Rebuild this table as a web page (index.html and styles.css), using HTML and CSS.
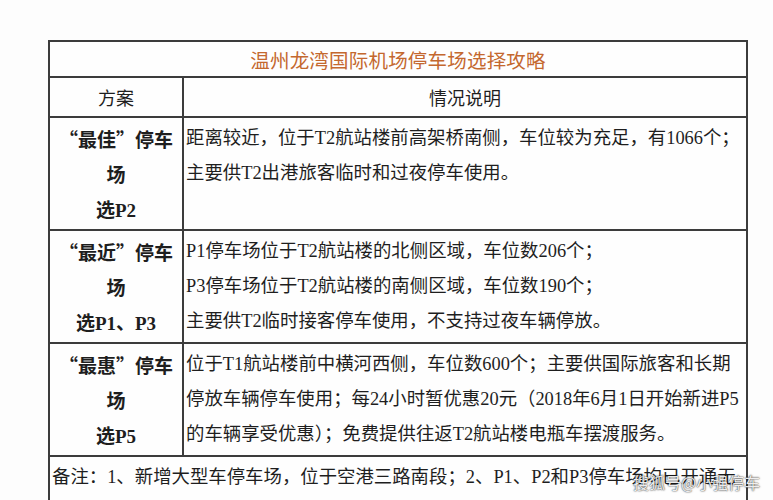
FILE: index.html
```html
<!DOCTYPE html>
<html lang="zh">
<head>
<meta charset="utf-8">
<title>温州龙湾国际机场停车场选择攻略</title>
<link rel="stylesheet" href="styles.css">
</head>
<body>
<div class="page">
  <table class="guide">
    <colgroup><col class="c1"><col class="c2"></colgroup>
    <tr class="r-title"><td colspan="2" class="title">温州龙湾国际机场停车场选择攻略</td></tr>
    <tr class="r-head"><td class="head">方案</td><td class="head">情况说明</td></tr>
    <tr class="r-body">
      <td class="plan"><div><span class="q">“</span>最佳<span class="q">”</span>停车</div><div>场</div><div>选P2</div></td>
      <td class="desc"><div>距离较近，位于T2航站楼前高架桥南侧，车位较为充足，有1066个；</div><div>主要供T2出港旅客临时和过夜停车使用。</div></td>
    </tr>
    <tr class="r-body">
      <td class="plan"><div><span class="q">“</span>最近<span class="q">”</span>停车</div><div>场</div><div>选P1、P3</div></td>
      <td class="desc"><div>P1停车场位于T2航站楼的北侧区域，车位数206个；</div><div>P3停车场位于T2航站楼的南侧区域，车位数190个；</div><div>主要供T2临时接客停车使用，不支持过夜车辆停放。</div></td>
    </tr>
    <tr class="r-body">
      <td class="plan"><div><span class="q">“</span>最惠<span class="q">”</span>停车</div><div>场</div><div>选P5</div></td>
      <td class="desc"><div>位于T1航站楼前中横河西侧，车位数600个；主要供国际旅客和长期</div><div>停放车辆停车使用；每24小时暂优惠20元（2018年6月1日开始新进P5</div><div>的车辆享受优惠）；免费提供往返T2航站楼电瓶车摆渡服务。</div></td>
    </tr>
    <tr class="r-note"><td colspan="2" class="note"><div class="note-line">备注：1、新增大型车停车场，位于空港三路南段；2、P1、P2和P3停车场均已开通无</div></td></tr>
  </table>
  <div class="watermark">搜狐号@小强停车</div>
</div>
</body>
</html>
```
FILE: styles.css
```css
html, body {
  margin: 0;
  padding: 0;
  background: #fdfdfd;
  height: 500px;
  overflow: hidden;
}
.page {
  position: relative;
  width: 773px;
  height: 500px;
  padding: 40px 0 0 48px;
  box-sizing: border-box;
}
.guide {
  border-collapse: collapse;
  table-layout: fixed;
  width: 698px;
  font-family: "Liberation Serif", "Noto Sans CJK SC", serif;
  color: #1e1e1e;
  font-size: 18.4px;
  background: #fefefe;
}
.c1 { width: 134px; }
.c2 { width: 564px; }
.guide td {
  border: 2px solid #3c3c3c;
  padding: 0;
  vertical-align: top;
}
.r-title td { height: 34px; }
.title {
  text-align: center;
  vertical-align: middle !important;
  color: #c4682f;
  font-family: "Noto Sans CJK SC", sans-serif;
  font-size: 19.5px;
  letter-spacing: 0.2px;
}
.r-head td { height: 38px; }
.head {
  text-align: center;
  vertical-align: middle !important;
  font-family: "Noto Sans CJK SC", sans-serif;
  font-size: 18px;
}
.r-body td { height: 108px; }
.plan {
  text-align: center;
  font-weight: bold;
  font-size: 19px;
  line-height: 35px;
  padding-top: 3px !important;
  white-space: nowrap;
}
.q {
  font-family: "Noto Sans CJK SC", sans-serif;
}
.desc {
  line-height: 35px;
  padding: 3px 0 0 2px !important;
  white-space: nowrap;
  overflow: hidden;
}
.r-note td { height: 60px; }
.note {
  overflow: hidden;
}
.note-line {
  white-space: nowrap;
  line-height: 36px;
  padding: 2px 0 0 2px;
}
.watermark {
  position: absolute;
  left: 633px;
  top: 470px;
  font-family: "Noto Sans CJK SC", sans-serif;
  font-size: 16px;
  color: rgba(255, 255, 255, 0.92);
  text-shadow: 0 0 2px rgba(0, 0, 0, 0.75), 0 0 1px rgba(0, 0, 0, 0.6);
  white-space: nowrap;
}
```
